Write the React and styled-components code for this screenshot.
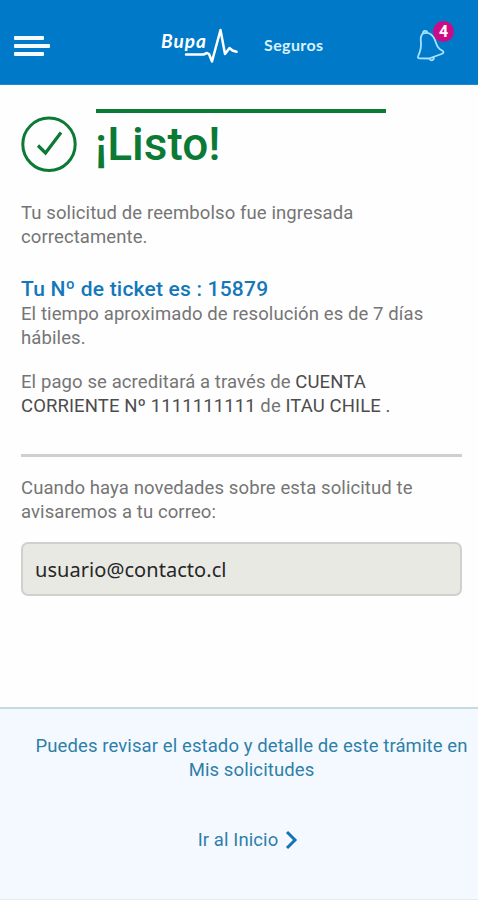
import styled, { createGlobalStyle } from 'styled-components';

const GlobalStyle = createGlobalStyle`
  * {
    box-sizing: border-box;
  }

  body {
    margin: 0;
    background: #fefefe;
    font-family: Roboto, 'Liberation Sans', sans-serif;
    color: #757575;
  }

  p, h1, h2 {
    margin: 0;
  }
`;

const Page = styled.div`
  display: flex;
  flex-direction: column;
  width: 100%;
  height: 900px;
  overflow: hidden;
`;

const Header = styled.header`
  display: grid;
  grid-template-columns: 161px 1fr 62px;
  height: 85px;
  padding-top: 20px;
  background: #0079c8;
  border-bottom: 1px solid #2b86c4;
  flex-shrink: 0;
`;

const MenuButton = styled.button`
  display: flex;
  flex-direction: column;
  align-items: flex-start;
  gap: 4px;
  padding: 16px 0 0 14px;
  border: none;
  background: none;
`;

const MenuLine = styled.span`
  width: ${(props) => (props.$long ? 36 : 30)}px;
  height: 4px;
  border-radius: 1px;
  background: #f4fbff;
`;

const Brand = styled.div`
  display: flex;
  align-items: flex-start;
`;

const BrandName = styled.span`
  width: 23px;
  padding-top: 10px;
  font-family: Lato, sans-serif;
  font-size: 19px;
  line-height: 22px;
  font-weight: 700;
  font-style: italic;
  letter-spacing: 1px;
  color: #fff;
`;

const Pulse = styled.svg`
  display: block;
  flex-shrink: 0;
`;

const BrandUnit = styled.span`
  margin-left: 26px;
  padding-top: 15px;
  font-family: Lato, sans-serif;
  font-size: 16px;
  line-height: 20px;
  font-weight: 700;
  letter-spacing: 0.4px;
  color: #d9f1ff;
`;

const BellButton = styled.button`
  position: relative;
  display: flex;
  align-items: flex-start;
  padding: 8px 0 0;
  border: none;
  background: none;
`;

const Badge = styled.span`
  position: absolute;
  top: 1px;
  left: 17px;
  width: 21px;
  height: 21px;
  border-radius: 50%;
  background: #cc0b86;
  color: #fff;
  font-family: Roboto, sans-serif;
  font-size: 16px;
  font-weight: 700;
  line-height: 21px;
  text-align: center;
`;

const Content = styled.main`
  flex: 1;
  padding: 24px 16px 0 21px;
`;

const TitleRow = styled.div`
  display: flex;
  gap: 19px;
  height: 92px;
`;

const CheckIcon = styled.svg`
  display: block;
  margin-top: 7px;
`;

const Title = styled.h1`
  width: 290px;
  height: 68px;
  border-top: 4px solid #0b7a35;
  padding-top: 4px;
  font-size: 46px;
  line-height: 55px;
  font-weight: 500;
  letter-spacing: 0;
  text-indent: -1px;
  color: #0b7a35;
`;

const Text = styled.p`
  font-size: 18.5px;
  line-height: 24px;
  letter-spacing: 0.1px;
  margin-bottom: ${(props) => props.$bottom || 0}px;
  white-space: nowrap;
`;

const Dark = styled.span`
  color: #4c4c4c;
`;

const Ticket = styled.h2`
  font-size: 21px;
  line-height: 26px;
  font-weight: 500;
  letter-spacing: 0.2px;
  color: #1378b9;
`;

const Divider = styled.hr`
  height: 3px;
  margin: 0 0 19px;
  border: none;
  background: #cfcfcf;
`;

const EmailField = styled.div`
  display: flex;
  align-items: center;
  height: 54px;
  padding: 1px 0 0 12px;
  border: 2px solid #d0d1ce;
  border-radius: 7px;
  background: #e9e9e4;
  color: #262626;
  font-family: 'Noto Sans', 'Open Sans', sans-serif;
  font-size: 20px;
  line-height: 28px;
  letter-spacing: 0.05px;
`;

const Footer = styled.footer`
  height: 193px;
  padding-top: 25px;
  border-top: 2px solid #c5dcdf;
  border-bottom: 1px solid #e6ebf0;
  background: #f4f9ff;
  color: #2e7fa9;
  text-align: center;
  flex-shrink: 0;
`;

const FooterText = styled(Text)`
  padding-left: 25px;
`;

const HomeLink = styled.a`
  display: flex;
  justify-content: center;
  align-items: center;
  gap: 7px;
  padding-left: 18px;
  font-size: 18.5px;
  line-height: 24px;
  letter-spacing: 0.1px;
`;

function App() {
  return (
    <>
      <GlobalStyle />
      <Page>
        <Header>
          <MenuButton aria-label="Menu">
            <MenuLine />
            <MenuLine $long />
            <MenuLine />
          </MenuButton>
          <Brand>
            <BrandName>Bupa</BrandName>
            <Pulse width="54" height="46" viewBox="184 20 54 46" fill="none">
              <path
                d="M186 54.500H203.500l3.500-1.500 2 1 3 7.500 8.500-31.500 4.500 24 4.500-6 3 2.500 4 1.300"
                stroke="#fff"
                strokeWidth="2.500"
                strokeLinecap="round"
                strokeLinejoin="round"
              />
            </Pulse>
            <BrandUnit>Seguros</BrandUnit>
          </Brand>
          <BellButton aria-label="Notificaciones">
            <svg width="30" height="36" viewBox="416 28 30 36" fill="none" stroke="#a9e2ff" strokeWidth="1.800" strokeLinejoin="round">
              <path d="M423 33.500c-3 2-2.500 6-2 10 .4 5-.8 8-2.600 12-1 2.300-.5 3 1.500 2.900L429 58.500 441.500 54c2.200-.8 2.600-2.200 1-3.200-4.500-2.300-5.500-4.800-7-9.300-1.500-5.500-6-10.500-12.500-8z" />
              <path d="M423 33.500c-.5-3.300 4-3.500 4.300-.7M429.500 58.500c1.200 3 4.500 2 4.500-1.500" />
            </svg>
            <Badge>4</Badge>
          </BellButton>
        </Header>
        <Content>
          <TitleRow>
            <CheckIcon width="56" height="56" viewBox="0 0 56 56" fill="none" stroke="#0b7a35">
              <circle cx="28" cy="28.300" r="26.200" strokeWidth="3" />
              <path d="M17 29.500l7.500 7.500L40 16.500" strokeWidth="3.200" />
            </CheckIcon>
            <Title>¡Listo!</Title>
          </TitleRow>
          <Text $bottom={27}>
            Tu solicitud de reembolso fue ingresada
            <br />
            correctamente.
          </Text>
          <Ticket>Tu Nº de ticket es : 15879</Ticket>
          <Text $bottom={20}>
            El tiempo aproximado de resolución es de 7 días
            <br />
            hábiles.
          </Text>
          <Text $bottom={36}>
            El pago se acreditará a través de <Dark>CUENTA</Dark>
            <br />
            <Dark>CORRIENTE Nº 1111111111</Dark> de <Dark>ITAU CHILE .</Dark>
          </Text>
          <Divider />
          <Text $bottom={18}>
            Cuando haya novedades sobre esta solicitud te
            <br />
            avisaremos a tu correo:
          </Text>
          <EmailField>usuario@contacto.cl</EmailField>
        </Content>
        <Footer>
          <FooterText $bottom={46}>
            Puedes revisar el estado y detalle de este trámite en
            <br />
            Mis solicitudes
          </FooterText>
          <HomeLink>
            Ir al Inicio
            <svg width="13" height="20" viewBox="0 0 13 20" fill="none" stroke="#1673b5" strokeWidth="3">
              <path d="M2 2l8 8-8 8" />
            </svg>
          </HomeLink>
        </Footer>
      </Page>
    </>
  );
}

export default App;
